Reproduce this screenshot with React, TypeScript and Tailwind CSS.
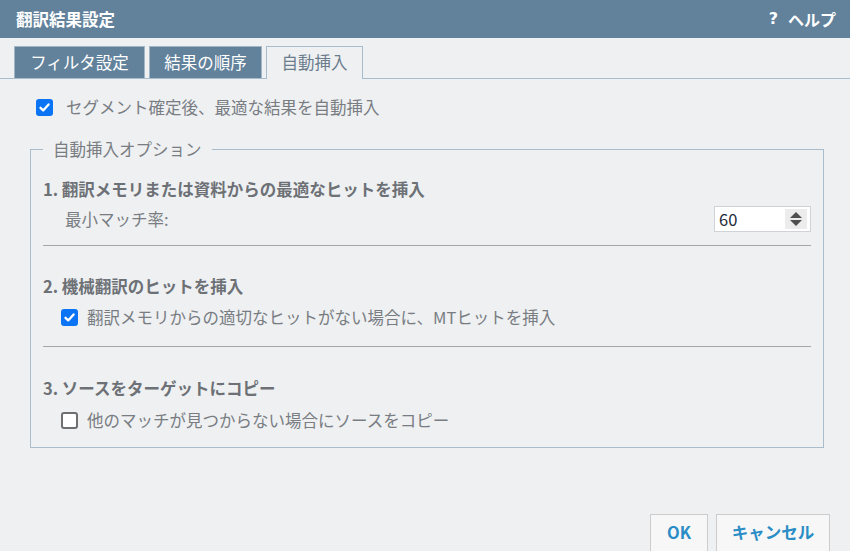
import React from "react";

function Check({ checked }: { checked: boolean }) {
  if (checked) {
    return (
      <span className="w-[17px] h-[17px] rounded-[3px] bg-[#0b74f5] flex items-center justify-center shrink-0">
        <svg width="13" height="13" viewBox="0 0 13 13">
          <path d="M2.5 6.8 L5.2 9.4 L10.6 3.4" fill="none" stroke="#fff" strokeWidth="2.3" strokeLinecap="round" strokeLinejoin="round" />
        </svg>
      </span>
    );
  }
  return <span className="w-[17px] h-[17px] rounded-[3px] border-2 border-[#6f6f6f] bg-white shrink-0" />;
}

export default function App() {
  return (
    <div className="w-[850px] h-[551px] bg-[#eef0f2] flex flex-col overflow-hidden font-['Noto_Sans_CJK_JP','Noto_Sans',sans-serif] text-[16.5px] text-[#797d82]">
      <div className="h-[38px] shrink-0 bg-[#62829c] flex items-center justify-between pl-[16px] pr-[14px] text-white font-bold">
        <span className="text-[16.5px] leading-none">翻訳結果設定</span>
        <span className="flex items-center gap-[10px] text-[16px] leading-none">
          <span className="font-['DejaVu_Sans'] font-bold text-[16px]">?</span>
          <span>ヘルプ</span>
        </span>
      </div>
      <div className="shrink-0 pt-[8px] pl-[14px] flex items-end gap-[4px] border-b border-[#a7bccc]">
        <div className="w-[131px] h-[32px] bg-[#62829c] border border-[#a3b6c6] border-b-0 text-white flex items-center justify-center leading-none">フィルタ設定</div>
        <div className="w-[113px] h-[32px] bg-[#62829c] border border-[#a3b6c6] border-b-0 text-white flex items-center justify-center leading-none">結果の順序</div>
        <div className="w-[97px] h-[33px] -mb-px bg-[#eef0f2] border border-[#a7bccc] border-b-0 text-[#6b7c8c] flex items-center justify-center leading-none pb-px">自動挿入</div>
      </div>
      <div className="flex flex-col">
        <label className="mt-[16px] h-[24px] pl-[36px] flex items-center gap-[13px] leading-none">
          <Check checked={true} />
          <span>セグメント確定後、最適な結果を自動挿入</span>
        </label>
        <fieldset className="mt-[18px] ml-[30px] w-[794px] border border-[#a9bccb] px-[12px] pb-[15px] pt-[16px] min-w-0">
          <legend className="px-[10px] leading-[24px]">自動挿入オプション</legend>
          <div className="h-[24px] flex items-center font-bold text-[#6d7176] leading-none">1. 翻訳メモリまたは資料からの最適なヒットを挿入</div>
          <div className="mt-[5px] h-[26px] flex items-center justify-between pl-[22px]">
            <span className="leading-none">最小マッチ率:</span>
            <div className="w-[97px] h-[26px] bg-white border border-[#cfd2d6] flex items-center justify-between pl-[4px] pr-[3px]">
              <span className="text-[#1d2a3a] text-[16.5px] leading-none">60</span>
              <span className="w-[22px] h-[20px] bg-[#ececec] flex flex-col items-center justify-center gap-[2px]">
                <svg width="12" height="6" viewBox="0 0 12 6"><path d="M6 0 L12 6 L0 6 Z" fill="#4f4f4f" /></svg>
                <svg width="12" height="6" viewBox="0 0 12 6"><path d="M0 0 L12 0 L6 6 Z" fill="#4f4f4f" /></svg>
              </span>
            </div>
          </div>
          <div className="mt-[13px] h-px bg-[#a3a7ab]" />
          <div className="mt-[28px] h-[24px] flex items-center font-bold text-[#6d7176] leading-none">2. 機械翻訳のヒットを挿入</div>
          <label className="mt-[7px] h-[24px] pl-[18px] flex items-center gap-[9px] leading-none">
            <Check checked={true} />
            <span>翻訳メモリからの適切なヒットがない場合に、MTヒットを挿入</span>
          </label>
          <div className="mt-[17px] h-px bg-[#a3a7ab]" />
          <div className="mt-[29px] h-[24px] flex items-center font-bold text-[#6d7176] leading-none">3. ソースをターゲットにコピー</div>
          <label className="mt-[8px] h-[24px] pl-[18px] flex items-center gap-[9px] leading-none">
            <Check checked={false} />
            <span>他のマッチが見つからない場合にソースをコピー</span>
          </label>
        </fieldset>
        <div className="mt-[66px] pr-[20px] flex justify-end gap-[8px]">
          <button className="w-[58px] h-[40px] bg-[#f7f7f7] border border-[#cccccc] text-[#2a8dc5] font-bold leading-none pb-[3px]">OK</button>
          <button className="w-[114px] h-[40px] bg-[#f7f7f7] border border-[#cccccc] text-[#2a8dc5] font-bold leading-none pb-[3px]">キャンセル</button>
        </div>
      </div>
    </div>
  );
}
